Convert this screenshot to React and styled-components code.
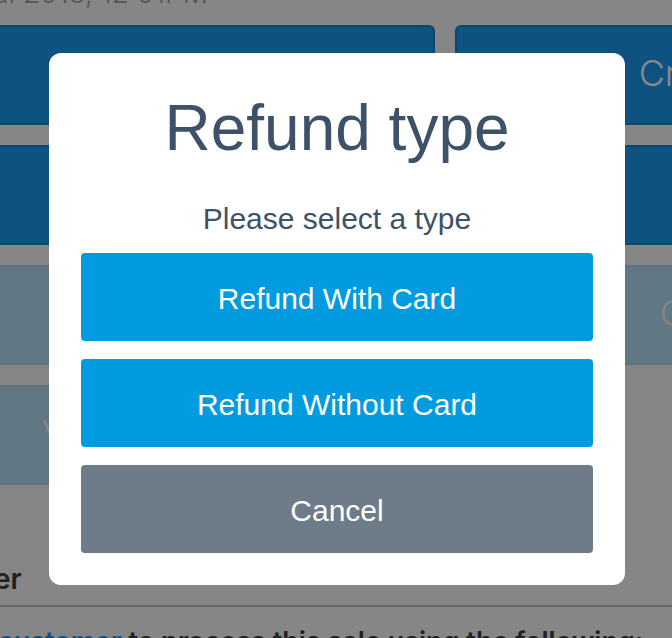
import React from "react";
import styled, { createGlobalStyle, css } from "styled-components";

const GlobalStyle = createGlobalStyle`
  *, *::before, *::after { box-sizing: border-box; }
  html, body, #root { height: 100%; }
  body {
    margin: 0;
    overflow: hidden;
    background: #dfdfdf;
    color: #3a3a3a;
    font-family: "Inter", "Liberation Sans", sans-serif;
  }
`;

const Page = styled.main`
  height: 100vh;
  overflow: hidden;
`;

const SaleDate = styled.p`
  margin: 0 0 14px -8px;
  height: 11px;
  display: flex;
  align-items: flex-end;
  line-height: 36px;
  font-size: 28px;
  font-weight: 300;
  color: #8f8f8f;
  white-space: nowrap;
`;

const Actions = styled.div`
  display: grid;
  grid-template-columns: minmax(0, 2fr) minmax(0, 1fr);
  grid-auto-rows: 100px;
  gap: 20px;
`;

const ActionButton = styled.button`
  overflow: hidden;
  padding: 0 0 4px ${(p) => p.$inset}px;
  border: 2px solid #1475b4;
  border-radius: 6px;
  background: #1789d5;
  color: #e4e4e4;
  font: 300 36px/40px "Inter", "Liberation Sans", sans-serif;
  text-align: left;
  white-space: nowrap;
  ${(p) =>
    p.$side === "left"
      ? css`border-left: 0; border-radius: 0 6px 6px 0;`
      : css`border-right: 0; border-radius: 6px 0 0 6px;`}
  &:disabled {
    border-color: #9cc0d6;
    background: #a2c6dc;
    color: #e2dcd8;
  }
`;

const SectionTitle = styled.h2`
  margin: 0;
  padding: 76px 0 8px;
  border-bottom: 2px solid #b1b1b1;
  font-size: 28px;
  font-weight: 600;
  line-height: 36px;
  text-indent: -6px;
`;

const Note = styled.p`
  margin: 17px 0 0 -2px;
  font-size: 27px;
  font-weight: 600;
  line-height: 36px;
  white-space: nowrap;
`;

const Link = styled.a`
  color: #1789d5;
  text-decoration: none;
`;

const Overlay = styled.div`
  position: fixed;
  inset: 0;
  display: grid;
  place-items: center;
  padding: 0 47px 0 49px;
  background: rgba(0, 0, 0, 0.4);
`;

const Dialog = styled.section`
  width: 100%;
  padding: 32px;
  border-radius: 12px;
  background: #fff;
  color: #3d5268;
  font-family: "Liberation Sans", Arial, sans-serif;
  text-align: center;
`;

const DialogTitle = styled.h1`
  margin: 0;
  font-size: 64px;
  font-weight: 400;
  line-height: 86px;
`;

const Prompt = styled.p`
  margin: 30px 0 16px;
  font-size: 30px;
  line-height: 36px;
`;

const Choices = styled.div`
  display: grid;
  gap: 18px;
`;

const Choice = styled.button`
  height: 88px;
  padding: 4px 16px 0;
  border: 0;
  border-radius: 4px;
  background: ${(p) => (p.$muted ? "#6e7b88" : "#039be0")};
  color: #fff;
  font: 400 30px/36px "Liberation Sans", Arial, sans-serif;
`;

const actions = [
  { id: 1, side: "left", label: "", inset: 0 },
  { id: 2, side: "right", label: "Cr", inset: 182 },
  { id: 3, side: "left", label: "", inset: 0 },
  { id: 4, side: "right", label: "", inset: 0 },
  { id: 5, side: "left", label: "", inset: 0, disabled: true },
  { id: 6, side: "right", label: "C", inset: 203, disabled: true },
  { id: 7, side: "left", label: "V", inset: 42, disabled: true },
];

export default function App() {
  return (
    <>
      <GlobalStyle />
      <Page>
        <SaleDate>ul 2018, 12:01PM</SaleDate>
        <Actions>
          {actions.map((a) => (
            <ActionButton
              key={a.id}
              type="button"
              disabled={a.disabled}
              $side={a.side}
              $inset={a.inset}
            >
              {a.label}
            </ActionButton>
          ))}
        </Actions>
        <SectionTitle>er</SectionTitle>
        <Note>
          <Link href="#customer">customer</Link> to process this sale using the following:
        </Note>
      </Page>
      <Overlay>
        <Dialog role="dialog" aria-modal="true" aria-labelledby="refund-title">
          <DialogTitle id="refund-title">Refund type</DialogTitle>
          <Prompt>Please select a type</Prompt>
          <Choices>
            <Choice type="button">Refund With Card</Choice>
            <Choice type="button">Refund Without Card</Choice>
            <Choice type="button" $muted>Cancel</Choice>
          </Choices>
        </Dialog>
      </Overlay>
    </>
  );
}
